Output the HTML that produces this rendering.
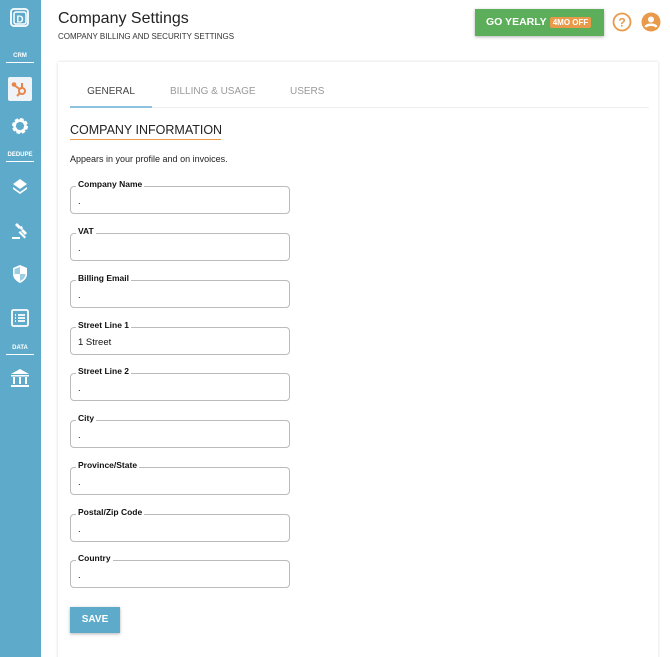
<!DOCTYPE html>
<html><head><meta charset="utf-8"><style>
*{box-sizing:border-box;margin:0;padding:0}
html,body{width:670px;height:657px;overflow:hidden;background:#fff;font-family:"Liberation Sans",sans-serif;position:relative}
.side{position:absolute;left:0;top:0;width:41px;height:657px;background:#5eaacb}
.side .lbl{position:absolute;left:6px;width:28px;text-align:center;color:#fff;font-size:6px;font-weight:bold;border-bottom:1px solid #fff;padding-bottom:3px}
.ic{position:absolute;left:8px;width:24px;height:24px}
h1{position:absolute;left:58px;top:10px;font-size:16px;font-weight:normal;color:#222}
.sub{position:absolute;left:58px;top:32px;font-size:8px;color:#333}
.go{position:absolute;left:475px;top:9px;width:129px;height:27px;background:#5cae5a;color:#fff;font-size:10.5px;font-weight:bold;line-height:27px;padding-left:11px;box-shadow:0 1px 3px rgba(0,0,0,.3)}
.go span{background:#e89a4a;font-size:8px;padding:1px 3px;border-radius:2px;margin-left:3px}
.card{position:absolute;left:58px;top:62px;width:600px;height:600px;background:#fff;box-shadow:0 0 3px rgba(0,0,0,.15)}
.tabs{position:absolute;left:12px;top:22px;width:579px;height:24px;border-bottom:1px solid #eee;font-size:10px;color:#999}
.tabs div{position:absolute;top:2px}
.tabs .a{left:0;top:0;padding-top:2px;width:82px;text-align:center;color:#444;border-bottom:2px solid #8cc2dd;height:24px}
h2{position:absolute;left:12px;top:61px;font-size:12.5px;font-weight:normal;color:#222;border-bottom:1px solid #e89a4a;padding-bottom:2px;white-space:nowrap;width:151px}
.desc{position:absolute;left:12px;top:92px;font-size:9px;color:#222}
.f{position:absolute;left:12px;width:220px;height:28px;border:1.5px solid #bbb;border-radius:4px;font-size:9.5px;color:#111;padding:9px 0 0 7px}
.f b{position:absolute;left:5px;top:-8px;background:#fff;padding:0 2px;font-size:8.5px}
.save{position:absolute;left:12px;top:545px;width:50px;height:26px;background:#5eaacb;color:#fff;font-size:10px;font-weight:bold;text-align:center;line-height:26px;box-shadow:0 1px 3px rgba(0,0,0,.3)}
</style></head><body>
<div class="side">
<svg class="ic" style="top:6px" viewBox="0 0 24 24"><rect x="3" y="3" width="17" height="17" rx="3" fill="none" stroke="#fff" stroke-width="1.8"/><rect x="6" y="6" width="12" height="12" rx="2" fill="none" stroke="#fff" stroke-width="1.5"/><text x="12" y="16.5" font-size="10" font-weight="bold" fill="#fff" text-anchor="middle" font-family="Liberation Sans">D</text></svg>
<div class="lbl" style="top:53px">CRM</div>
<div style="position:absolute;left:8px;top:77px;width:24px;height:24px;background:#eef4f8;border-radius:2px"></div>
<svg class="ic" style="top:77px" viewBox="0 0 24 24" fill="none" stroke="#e8864a" stroke-width="2"><circle cx="14" cy="14" r="3"/><path d="M14 11V6M11.5 12L6 8M12 16l-3 3"/><circle cx="6" cy="7.5" r="1.3" fill="#e8864a"/></svg>
<svg class="ic" style="top:114px" viewBox="0 0 24 24"><circle cx="12" cy="12" r="6" fill="none" stroke="#fff" stroke-width="4" stroke-dasharray="3 1.7"/><circle cx="12" cy="12" r="5.5" fill="none" stroke="#fff" stroke-width="2.5"/></svg>
<div class="lbl" style="top:152px">DEDUPE</div>
<svg class="ic" style="top:174px" viewBox="0 0 24 24" fill="#fff"><path d="M12 5l7 5-7 5-7-5z"/><path d="M5 13l7 5 7-5 0 2-7 5-7-5z"/></svg>
<svg class="ic" style="top:218px" viewBox="0 0 24 24" fill="#fff"><path d="M9 5l4 4-2 2-4-4zM15 11l4 4-2 2-4-4z"/><path d="M11 9l3-1 1 3-2 1z"/><path d="M12 13l6 6-1.5 1.5-6-6z"/><rect x="4" y="19" width="8" height="2"/></svg>
<svg class="ic" style="top:262px" viewBox="0 0 24 24"><path d="M12 3l7 3v6c0 4-3 7-7 9-4-2-7-5-7-9V6z" fill="#fff"/><path d="M12 5v7h5.5c0 3-2.5 6-5.5 7V12H6.5V7z" fill="#5eaacb" opacity=".6"/></svg>
<svg class="ic" style="top:306px" viewBox="0 0 24 24" fill="none" stroke="#fff" stroke-width="1.8"><rect x="4" y="4" width="16" height="16" rx="1.5"/><path d="M10 9h7M10 12h7M10 15h7M7 9h1M7 12h1M7 15h1"/></svg>
<div class="lbl" style="top:345px">DATA</div>
<svg class="ic" style="top:366px" viewBox="0 0 24 24" fill="#fff"><path d="M12 3l9 5H3z"/><rect x="3" y="9" width="18" height="1.5"/><rect x="5" y="11" width="2" height="7"/><rect x="11" y="11" width="2" height="7"/><rect x="17" y="11" width="2" height="7"/><rect x="3" y="19" width="18" height="2"/></svg>
</div>
<h1>Company Settings</h1>
<div class="sub">COMPANY BILLING AND SECURITY SETTINGS</div>
<div class="go">GO YEARLY<span>4MO OFF</span></div>
<svg style="position:absolute;left:612px;top:12px" width="20" height="20" viewBox="0 0 20 20"><circle cx="10" cy="10" r="8.5" fill="none" stroke="#e89a4a" stroke-width="1.8"/><text x="10" y="14.5" font-size="12" font-weight="bold" fill="#e89a4a" text-anchor="middle" font-family="Liberation Sans">?</text></svg>
<svg style="position:absolute;left:641px;top:12px" width="20" height="20" viewBox="0 0 20 20"><circle cx="10" cy="10" r="9.5" fill="#e89a4a"/><circle cx="10" cy="7.5" r="3" fill="#fff"/><path d="M4.5 15c1.5-3 9.5-3 11 0" stroke="#fff" stroke-width="2.5" fill="none"/></svg>
<div class="card">
<div class="tabs"><div class="a">GENERAL</div><div style="left:100px">BILLING &amp; USAGE</div><div style="left:220px">USERS</div></div>
<h2>COMPANY INFORMATION</h2>
<div class="desc">Appears in your profile and on invoices.</div>
<div class="f" style="top:124px"><b>Company Name</b>.</div>
<div class="f" style="top:171px"><b>VAT</b>.</div>
<div class="f" style="top:218px"><b>Billing Email</b>.</div>
<div class="f" style="top:265px"><b>Street Line 1</b>1 Street</div>
<div class="f" style="top:311px"><b>Street Line 2</b>.</div>
<div class="f" style="top:358px"><b>City</b>.</div>
<div class="f" style="top:405px"><b>Province/State</b>.</div>
<div class="f" style="top:452px"><b>Postal/Zip Code</b>.</div>
<div class="f" style="top:498px"><b>Country</b>.</div>
<div class="save">SAVE</div>
</div>
</body></html>
